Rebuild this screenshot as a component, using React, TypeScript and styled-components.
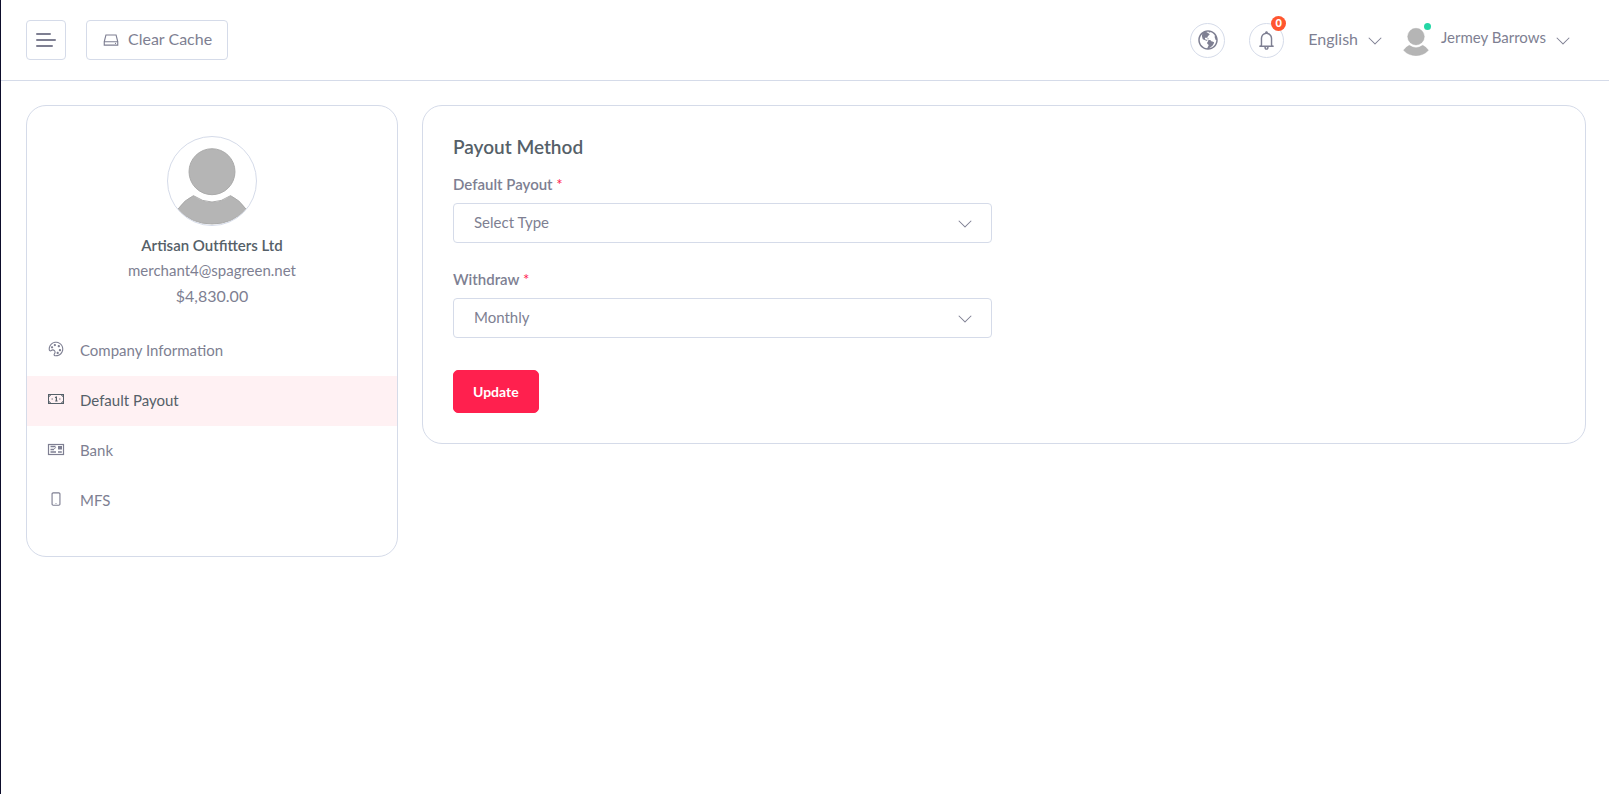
import React from "react";
import styled, { createGlobalStyle } from "styled-components";
import {
  LiaAngleDownSolid,
  LiaBell,
  LiaGlobeAmericasSolid,
  LiaHdd,
  LiaMobileSolid,
  LiaPaletteSolid,
} from "react-icons/lia";

const colors = {
  text: "#7e7f92",
  dark: "#556068",
  line: "#d5dbe9",
  brand: "#ff204e",
  soft: "#fff1f3",
};

const GlobalStyle = createGlobalStyle`
  *, *::before, *::after { box-sizing: border-box; }
  body {
    margin: 0;
    background: #fff;
    color: ${colors.text};
    font-family: Lato, "Liberation Sans", sans-serif;
    font-size: 15px;
    line-height: 25px;
  }
  button, select { font: inherit; color: inherit; }
`;

const Page = styled.div`
  min-height: 100vh;
  border-left: 1px solid #0d0d2b;
`;

const Header = styled.header`
  display: flex;
  align-items: center;
  justify-content: space-between;
  height: 81px;
  padding: 0 38px 0 25px;
  border-bottom: 1px solid ${colors.line};
`;

const HeaderGroup = styled.div<{ $gap: number }>`
  display: flex;
  align-items: center;
  gap: ${(p) => p.$gap}px;
`;

const OutlineButton = styled.button<{ $square?: boolean }>`
  display: flex;
  align-items: center;
  justify-content: center;
  gap: 8px;
  height: 40px;
  width: ${(p) => (p.$square ? "40px" : "auto")};
  padding: ${(p) => (p.$square ? "0" : "0 15px")};
  border: 1px solid ${colors.line};
  border-radius: 4px;
  background: #fff;
  cursor: pointer;
`;

const ButtonText = styled.span<{ $size: number; $lift: number }>`
  padding-bottom: ${(p) => p.$lift}px;
  font-size: ${(p) => p.$size}px;
`;

const RoundButton = styled.button`
  position: relative;
  display: flex;
  align-items: center;
  justify-content: center;
  width: 35px;
  height: 35px;
  padding: 0;
  border: 1px solid ${colors.line};
  border-radius: 50%;
  background: #fff;
  cursor: pointer;
`;

const Badge = styled.span`
  position: absolute;
  top: -8px;
  right: -3px;
  width: 15px;
  height: 15px;
  border-radius: 50%;
  background: #ff5630;
  color: #fff;
  font-size: 11px;
  font-weight: 900;
  line-height: 14px;
  text-align: center;
`;

const MenuButton = styled.button`
  display: flex;
  align-items: center;
  gap: 9px;
  padding: 0;
  border: 0;
  background: none;
  cursor: pointer;
`;

const UserPhoto = styled.span`
  position: relative;
  display: flex;
`;

const OnlineDot = styled.span`
  position: absolute;
  top: -1px;
  right: 1px;
  width: 7px;
  height: 7px;
  border-radius: 50%;
  background: #24d6a5;
`;

const Main = styled.main`
  display: grid;
  grid-template-columns: minmax(0, calc(25% - 18px)) minmax(0, 1fr);
  align-items: start;
  gap: 24px;
  padding: 24px 23px 24px 25px;
`;

const Card = styled.section`
  border: 1px solid ${colors.line};
  border-radius: 20px;
  background: #fff;
  padding: 30px 0;
`;

const Profile = styled.div`
  display: flex;
  flex-direction: column;
  align-items: center;
  margin-bottom: 18px;
`;

const ProfilePhoto = styled.div`
  display: flex;
  width: 90px;
  height: 90px;
  margin-bottom: 7px;
  border: 1px solid ${colors.line};
  border-radius: 50%;
  overflow: hidden;
`;

const ProfileName = styled.h1`
  margin: 0;
  color: ${colors.dark};
  font-size: 15px;
  font-weight: 600;
  line-height: 25px;
`;

const ProfileText = styled.p<{ $size: number }>`
  margin: 0;
  font-size: ${(p) => p.$size}px;
`;

const NavLink = styled.a<{ $active?: boolean }>`
  display: flex;
  align-items: center;
  gap: 15px;
  height: 50px;
  padding: 0 20px 1px;
  background: ${(p) => (p.$active ? colors.soft : "transparent")};
  color: ${(p) => (p.$active ? colors.dark : colors.text)};
  text-decoration: none;

  svg {
    margin-bottom: 3px;
  }
`;

const Form = styled.form`
  display: flex;
  flex-direction: column;
  align-items: flex-start;
  width: calc(50% + 18px);
  padding: 0 30px;
`;

const Title = styled.h2`
  margin: 0 0 14px;
  color: ${colors.dark};
  font-size: 19px;
  font-weight: 600;
  line-height: 22px;
`;

const Field = styled.div`
  width: 100%;
  margin-bottom: 24px;
`;

const Label = styled.label`
  display: block;
  height: 25px;
  margin-bottom: 6px;
  font-size: 15px;
  font-weight: 600;
  line-height: 25px;
`;

const Required = styled.span`
  color: #ff204e;
  font-weight: 400;
`;

const SelectBox = styled.div`
  position: relative;
`;

const Select = styled.select`
  display: block;
  width: 100%;
  height: 40px;
  padding: 0 44px 2px 20px;
  border: 1px solid ${colors.line};
  border-radius: 4px;
  background: #fff;
  appearance: none;
`;

const SelectArrow = styled(LiaAngleDownSolid)`
  position: absolute;
  top: 12px;
  right: 19px;
  pointer-events: none;
`;

const SubmitButton = styled.button`
  height: 43px;
  margin-top: 8px;
  padding: 0 19px 1px;
  border: 1px solid ${colors.brand};
  border-radius: 5px;
  background: ${colors.brand};
  color: #fff;
  font-size: 14px;
  font-weight: 700;
  cursor: pointer;
`;

type IconProps = { size?: number };

function MenuIcon() {
  return (
    <svg width="20" height="16" viewBox="0 0 20 16" stroke="currentColor" strokeWidth="2" strokeLinecap="round" aria-hidden="true">
      <path d="M1 2h13M1 8h18M1 14h15" />
    </svg>
  );
}

function BillIcon({ size = 18 }: IconProps) {
  return (
    <svg width={size} height={size} viewBox="0 0 18 18" fill="none" stroke="currentColor" aria-hidden="true">
      <rect x="1.5" y="4.5" width="15" height="9" />
      <path d="M1.5 6.5q2 0 2-2M16.5 6.5q-2 0-2-2M1.5 11.5q2 0 2 2M16.5 11.5q-2 0-2 2" />
      <path d="M8 7.5l1.4-.5v4M8.2 11h2.4M4.6 9h1.2M12.2 9h1.2" strokeWidth="1.2" />
    </svg>
  );
}

function CheckIcon({ size = 18 }: IconProps) {
  return (
    <svg width={size} height={size} viewBox="0 0 18 18" fill="none" stroke="currentColor" aria-hidden="true">
      <rect x="1.5" y="4.5" width="15" height="10" strokeWidth="1.2" />
      <path d="M3.5 6.5h5M3.5 9.5h3.5M3.5 12h5.5M11 12h3.8" strokeWidth="1.4" />
      <path d="M7 9.3l1.8-2" />
      <rect x="11.5" y="6.5" width="3" height="2.5" fill="currentColor" />
    </svg>
  );
}

function Person({ size }: { size: number }) {
  return (
    <svg width={size} height={size} viewBox="0 0 90 90" fill="#b5b5b5" stroke="#a9a9a9" aria-hidden="true">
      <circle cx="45" cy="35.5" r="23.5" />
      <path d="M26 60q19 13 38 0 9 4 16 14-14 15-35 15T10 74q7-10 16-14z" />
    </svg>
  );
}

const links = [
  { label: "Company Information", icon: LiaPaletteSolid },
  { label: "Default Payout", icon: BillIcon, active: true },
  { label: "Bank", icon: CheckIcon },
  { label: "MFS", icon: LiaMobileSolid },
];

const fields = [
  { id: "payout", label: "Default Payout", options: ["Select Type", "Bank", "MFS"] },
  { id: "withdraw", label: "Withdraw", options: ["Monthly", "Weekly", "Daily"] },
];

export default function App() {
  return (
    <>
      <GlobalStyle />
      <Page>
        <Header>
          <HeaderGroup $gap={20}>
            <OutlineButton $square aria-label="Toggle menu">
              <MenuIcon />
            </OutlineButton>
            <OutlineButton>
              <LiaHdd size={18} />
              <ButtonText $size={16} $lift={3}>Clear Cache</ButtonText>
            </OutlineButton>
          </HeaderGroup>
          <HeaderGroup $gap={24}>
            <RoundButton aria-label="Visit site">
              <LiaGlobeAmericasSolid size={24} />
            </RoundButton>
            <RoundButton aria-label="Notifications">
              <LiaBell size={23} />
              <Badge>0</Badge>
            </RoundButton>
            <HeaderGroup $gap={17}>
              <MenuButton>
                <ButtonText $size={16} $lift={3}>English</ButtonText>
                <LiaAngleDownSolid size={16} />
              </MenuButton>
              <MenuButton>
                <UserPhoto>
                  <Person size={32} />
                  <OnlineDot />
                </UserPhoto>
                <ButtonText $size={15} $lift={5}>Jermey Barrows</ButtonText>
                <LiaAngleDownSolid size={16} />
              </MenuButton>
            </HeaderGroup>
          </HeaderGroup>
        </Header>
        <Main>
          <Card>
            <Profile>
              <ProfilePhoto>
                <Person size={88} />
              </ProfilePhoto>
              <ProfileName>Artisan Outfitters Ltd</ProfileName>
              <ProfileText $size={15}>merchant4@spagreen.net</ProfileText>
              <ProfileText $size={16}>$4,830.00</ProfileText>
            </Profile>
            <nav>
              {links.map(({ label, icon: Icon, active }) => (
                <NavLink key={label} href="#" $active={active}>
                  <Icon size={18} />
                  {label}
                </NavLink>
              ))}
            </nav>
          </Card>
          <Card>
            <Form onSubmit={(e) => e.preventDefault()}>
              <Title>Payout Method</Title>
              {fields.map((f) => (
                <Field key={f.id}>
                  <Label htmlFor={f.id}>
                    {f.label} <Required>*</Required>
                  </Label>
                  <SelectBox>
                    <Select id={f.id}>
                      {f.options.map((o) => (
                        <option key={o}>{o}</option>
                      ))}
                    </Select>
                    <SelectArrow size={16} />
                  </SelectBox>
                </Field>
              ))}
              <SubmitButton type="submit">Update</SubmitButton>
            </Form>
          </Card>
        </Main>
      </Page>
    </>
  );
}
